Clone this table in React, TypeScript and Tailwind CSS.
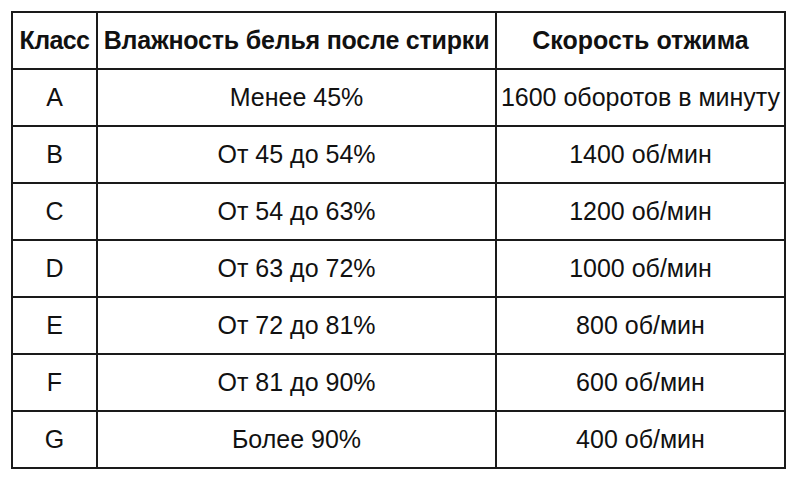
const rows = [
  ["A", "Менее 45%", "1600 оборотов в минуту"],
  ["B", "От 45 до 54%", "1400 об/мин"],
  ["C", "От 54 до 63%", "1200 об/мин"],
  ["D", "От 63 до 72%", "1000 об/мин"],
  ["E", "От 72 до 81%", "800 об/мин"],
  ["F", "От 81 до 90%", "600 об/мин"],
  ["G", "Более 90%", "400 об/мин"],
]

export default function App() {
  return (
    <div className="w-[800px] h-[481px] bg-white pt-[11px] pl-[11px] text-[#111] font-['Liberation_Sans',Arial,sans-serif]">
      <table className="border-collapse table-fixed text-[25px] leading-none">
        <colgroup>
          <col className="w-[85px]" />
          <col className="w-[399px]" />
          <col className="w-[289px]" />
        </colgroup>
        <thead>
          <tr className="h-[57px]">
            <th className="border-2 border-[#1a1a1a] font-bold text-center tracking-[-0.6px] px-0">Класс</th>
            <th className="border-2 border-[#1a1a1a] font-bold text-center tracking-[-0.2px] px-0">Влажность белья после стирки</th>
            <th className="border-2 border-[#1a1a1a] font-bold text-center px-0">Скорость отжима</th>
          </tr>
        </thead>
        <tbody>
          {rows.map((r) => (
            <tr key={r[0]} className="h-[57px]">
              <td className="border-2 border-[#1a1a1a] text-center px-0">{r[0]}</td>
              <td className="border-2 border-[#1a1a1a] text-center px-0">{r[1]}</td>
              <td className="border-2 border-[#1a1a1a] text-center px-0 whitespace-nowrap">{r[2]}</td>
            </tr>
          ))}
        </tbody>
      </table>
    </div>
  )
}
